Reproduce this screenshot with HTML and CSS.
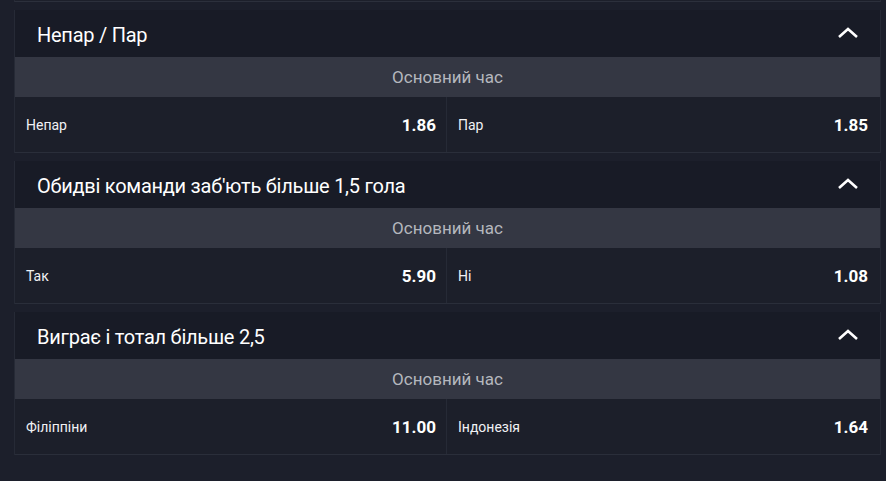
FILE: index.html
```html
<!DOCTYPE html>
<html lang="uk">
<head>
    <meta charset="UTF-8">
    <meta name="viewport" content="width=device-width, initial-scale=1.0">
    <title>Ринки</title>
    <link rel="stylesheet" href="styles.css">
</head>
<body>
    <div class="markets">
        <div class="market-tail"></div>

        <div class="market">
            <div class="market-header">
                <span class="market-title">Непар / Пар</span>
                <svg class="chevron" width="22" height="12" viewBox="0 0 22 12"><path d="M2 10 L11 2 L20 10" fill="none" stroke="#fff" stroke-width="2.6"/></svg>
            </div>
            <div class="period">Основний час</div>
            <div class="outcomes">
                <div class="outcome"><span class="name">Непар</span><span class="odds">1.86</span></div>
                <div class="outcome"><span class="name">Пар</span><span class="odds">1.85</span></div>
            </div>
        </div>

        <div class="market">
            <div class="market-header">
                <span class="market-title">Обидві команди заб'ють більше 1,5 гола</span>
                <svg class="chevron" width="22" height="12" viewBox="0 0 22 12"><path d="M2 10 L11 2 L20 10" fill="none" stroke="#fff" stroke-width="2.6"/></svg>
            </div>
            <div class="period">Основний час</div>
            <div class="outcomes">
                <div class="outcome"><span class="name">Так</span><span class="odds">5.90</span></div>
                <div class="outcome"><span class="name">Ні</span><span class="odds">1.08</span></div>
            </div>
        </div>

        <div class="market">
            <div class="market-header">
                <span class="market-title">Виграє і тотал більше 2,5</span>
                <svg class="chevron" width="22" height="12" viewBox="0 0 22 12"><path d="M2 10 L11 2 L20 10" fill="none" stroke="#fff" stroke-width="2.6"/></svg>
            </div>
            <div class="period">Основний час</div>
            <div class="outcomes">
                <div class="outcome"><span class="name">Філіппіни</span><span class="odds">11.00</span></div>
                <div class="outcome"><span class="name">Індонезія</span><span class="odds">1.64</span></div>
            </div>
        </div>
    </div>
</body>
</html>
```

FILE: styles.css
```css
body {
    margin: 0;
    background-color: #1c1f2b;
    color: white;
    font-family: Roboto, "Noto Sans", sans-serif;
}
.markets {
    padding: 0 5px 0 14px;
}
.market-tail {
    height: 1px;
    border-left: 1px solid #262a36;
    border-right: 1px solid #262a36;
    border-bottom: 1px solid #2c303c;
    background-color: #1d202b;
}
.market {
    margin-top: 8px;
    border-left: 1px solid #262a36;
    border-right: 1px solid #262a36;
}
.market-header {
    height: 47px;
    display: flex;
    align-items: center;
    justify-content: space-between;
    padding: 0 21px 0 22px;
    background-color: #181b26;
}
.market-title {
    font-size: 20px;
    letter-spacing: -0.25px;
    padding-top: 2px;
}
.chevron {
    display: block;
    margin-top: -2px;
}
.period {
    height: 40px;
    line-height: 40px;
    text-align: center;
    background-color: #343743;
    color: #b5b7be;
    font-size: 17px;
}
.outcomes {
    display: grid;
    grid-template-columns: 431px 1fr;
    border-bottom: 1px solid #2a2e3a;
    background-color: #1c1f2a;
}
.outcome {
    height: 55px;
    display: flex;
    align-items: center;
    justify-content: space-between;
    padding: 0 10px 0 11px;
}
.outcome + .outcome {
    border-left: 1px solid #262a36;
    padding: 0 12px 0 11px;
}
.name {
    font-size: 14px;
    color: #f0f1f4;
}
.odds {
    font-size: 17px;
    font-weight: bold;
}
```
